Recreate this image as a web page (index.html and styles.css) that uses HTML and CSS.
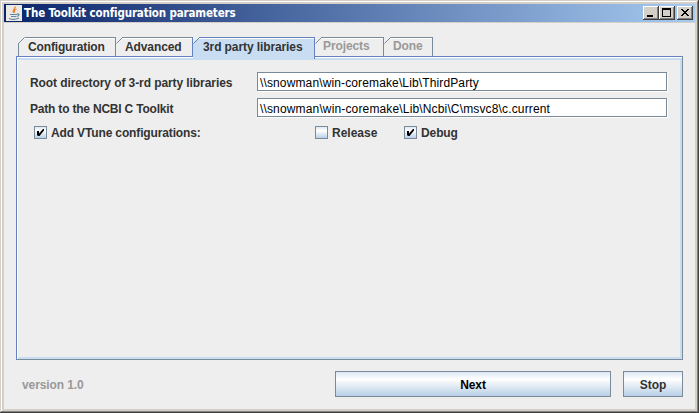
FILE: index.html
```html
<!DOCTYPE html>
<html lang="en">
<head>
<meta charset="utf-8">
<title>The Toolkit configuration parameters</title>
<link rel="stylesheet" href="styles.css">
</head>
<body>
<div class="window">
  <header class="titlebar">
    <svg class="app-icon" width="16" height="16" viewBox="0 0 16 16">
      <rect width="16" height="16" fill="#ece9e4"/>
      <path d="M9 1.500C10 4 5.500 4.500 7.500 8M10.500 4C8 5 8 6 8.800 7.500" fill="none" stroke="#e8822a" stroke-width="1.300"/>
      <path d="M4 9.500h7M5 11.500h5M11 9c3-.5 2.500 2-.5 2.500M3 13.500c3 1.200 7 1 10-.5" fill="none" stroke="#5f87a5" stroke-width="1.200"/>
    </svg>
    <h1 class="title">The Toolkit configuration parameters</h1>
    <div class="controls">
      <span class="control"><svg width="16" height="14" shape-rendering="crispEdges"><path d="M4 9h6v2H4z"/></svg></span>
      <span class="control"><svg width="16" height="14" shape-rendering="crispEdges"><path fill-rule="evenodd" d="M3 2h9v9H3zM4 4v6h7V4z"/></svg></span>
      <span class="control close"><svg width="16" height="14" shape-rendering="crispEdges"><path d="M4 3h2v1h1v1h2V4h1V3h2v1h-1v1h-1v1H9v1h1v1h1v1h1v1h-2V9H9V8H7v1H6v1H4V9h1V8h1V7h1V6H6V5H5V4H4z"/></svg></span>
    </div>
  </header>
  <main class="content">
    <nav class="tabs">
      <div class="tab first"><svg class="corner" width="7" height="7"><path class="cut" d="M0 0h6L0 6z"/><path d="M.5 6.500l6-6"/></svg><span>Configuration</span></div>
      <div class="tab advanced"><svg class="corner" width="7" height="7"><path d="M.5 6.500l6-6"/></svg><span>Advanced</span></div>
      <div class="tab selected"><svg class="corner" width="7" height="7"><path class="cut" d="M0 0h6L0 6z"/><path d="M.5 6.500l6-6"/></svg><span>3rd party libraries</span></div>
      <div class="tab projects disabled"><svg class="corner" width="7" height="7"><path d="M.5 6.500l6-6"/></svg><span>Projects</span></div>
      <div class="tab done disabled"><svg class="corner" width="7" height="7"><path d="M.5 6.500l6-6"/></svg><span>Done</span></div>
    </nav>
    <section class="panel">
      <div class="row"><label class="label">Root directory of 3-rd party libraries</label><div class="field">\\snowman\win-coremake\Lib\ThirdParty</div></div>
      <div class="row"><label class="label toolkit">Path to the NCBI C Toolkit</label><div class="field path">\\snowman\win-coremake\Lib\Ncbi\C\msvc8\c.current</div></div>
      <div class="checks">
        <div class="check vtune"><span class="box"><svg width="11" height="11"><path d="M2 4h2v2.500L8 2h1v1.500L4.500 9H3L2 8z"/></svg></span><span>Add VTune configurations:</span></div>
        <div class="check release"><span class="box"></span><span>Release</span></div>
        <div class="check debug"><span class="box"><svg width="11" height="11"><path d="M2 4h2v2.500L8 2h1v1.500L4.500 9H3L2 8z"/></svg></span><span>Debug</span></div>
      </div>
    </section>
    <footer class="footer">
      <span class="version">version 1.0</span>
      <div class="button next">Next</div>
      <div class="button stop">Stop</div>
    </footer>
  </main>
</div>
</body>
</html>
```
FILE: styles.css
```css
* { box-sizing: border-box; }
body { margin: 0; overflow: hidden; font: bold 12px/14px "Liberation Sans", Arial, sans-serif; color: #333; letter-spacing: -.1px; }
svg { display: block; }
.window {
  width: 699px; height: 413px; padding: 4px; background: #d4d0c8;
  box-shadow: inset -1px -1px #404040, inset 1px 1px #d4d0c8, inset -2px -2px #808080, inset 2px 2px #fff;
}
.titlebar {
  display: flex; align-items: center; height: 18px; padding: 0 2px 0 2px;
  background: linear-gradient(to right, #0a246a, #a6caf0);
}
.title { margin: 0 auto 0 1px; padding-left: 1px; font: bold 11.500px/16px "DejaVu Sans Condensed", "DejaVu Sans", sans-serif; letter-spacing: -.15px; color: #fff; white-space: nowrap; }
.controls { display: flex; }
.control {
  width: 16px; height: 14px; background: #d4d0c8;
  box-shadow: inset -1px -1px #404040, inset 1px 1px #fff, inset -2px -2px #808080;
}
.close { margin-left: 2px; }
.content { margin-top: 1px; height: 386px; padding: 14px 12px 0; background: #eee; }
.tabs { display: flex; height: 19px; padding-left: 2px; }
.tab {
  position: relative; height: 19px; padding: 2px 0 0 10px; white-space: nowrap;
  border-top: 1px solid #7a8a99; border-right: 1px solid #7a8a99;
  box-shadow: inset 0 1px #fff;
}
.tab::before { content: ""; position: absolute; left: 0; top: -1px; width: 6px; height: 2px; background: #eee; }
.first { width: 98px; border-left: 1px solid #7a8a99; padding-left: 9px; letter-spacing: -.15px; }
.first::after { content: ""; position: absolute; left: -1px; top: -1px; width: 1px; height: 6px; background: #eee; }
.advanced { width: 77px; border-right-color: #6382bf; padding-left: 9px; }
.selected { width: 122px; background: #c8ddf2; border-color: #6382bf; height: 22px; z-index: 1; }
.projects { width: 69px; padding-left: 8px; }
.done { width: 49px; padding-left: 9px; }
.disabled { color: #999; padding-top: 1px; }
.corner { position: absolute; left: 0; top: -1px; fill: none; stroke: #7a8a99; }
.corner .cut { stroke: none; fill: #eee; }
.first .corner { left: -1px; }
.selected .corner { stroke: #6382bf; }
.panel {
  height: 304px; padding: 15px 15px 0 13px;
  border: 1px solid #6382bf; border-right-color: #7a8a99; border-bottom-color: #7a8a99;
  box-shadow: inset 1px 1px #fff, inset 0 3px #c8ddf2, inset -2px -2px #c8ddf2;
}
.row { display: flex; align-items: center; height: 20px; margin-bottom: 6px; }
.label { width: 227px; padding-top: 1px; letter-spacing: -.08px; white-space: nowrap; }
.toolkit { letter-spacing: -.2px; }
.field {
  flex: 1; height: 19px; padding: 3px 0 0 2px; margin-bottom: 1px; background: #fff;
  border: 1px solid #7a8a99; box-shadow: 1px 1px #fff; color: #000; font-weight: normal; letter-spacing: .13px; white-space: nowrap;
}
.path { letter-spacing: .15px; }
.checks { display: flex; padding: 2px 0 0 4px; }
.check { display: flex; align-items: center; gap: 4px; height: 13px; white-space: nowrap; }
.check span:last-child { padding-top: 1px; }
.vtune { width: 281px; letter-spacing: -.14px; }
.release { width: 89px; letter-spacing: 0; }
.check .box { padding: 0; width: 13px; height: 13px; border: 1px solid #7a8a99; background: linear-gradient(#dde8f3, #fff 35%, #b8cfe5); }
.footer { display: flex; align-items: center; margin-top: 11px; padding-left: 6px; }
.version { width: 313px; padding-top: 1px; color: #999; }
.button {
  height: 26px; border: 1px solid #7a8a99; line-height: 26px; text-align: center;
  background: linear-gradient(#dde8f3, #fff 30%, #b8cfe5);
}
.next { width: 276px; margin-right: 12px; color: #000; }
.stop { width: 60px; }
```
